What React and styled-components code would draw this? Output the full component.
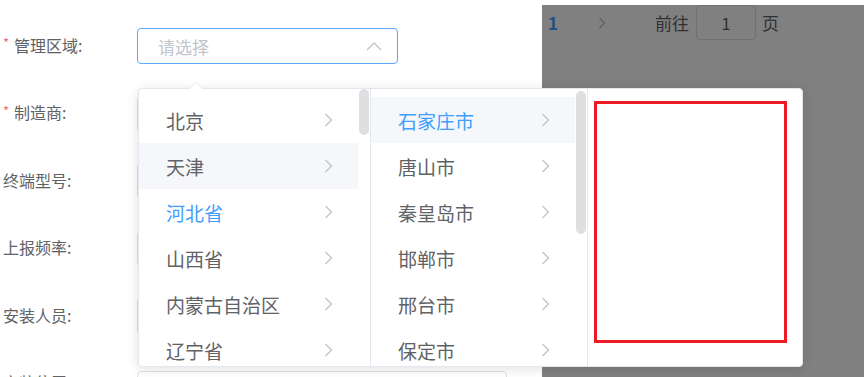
import React from 'react'
import styled, { createGlobalStyle } from 'styled-components'

const GlobalStyle = createGlobalStyle`
  html, body {
    margin: 0;
    padding: 0;
    background: #ffffff;
    font-family: "Noto Sans CJK SC", "Noto Sans", sans-serif;
  }
`

const Page = styled.div`
  position: relative;
  display: flex;
  width: 864px;
  height: 377px;
  overflow: hidden;
`

const DialogPane = styled.div`
  width: 539px;
  padding: 28px 0 0 3px;
  background: #ffffff;
`

const FormRow = styled.div`
  display: flex;
  align-items: center;
  height: 36px;
  margin-bottom: 31.5px;
`

const Label = styled.label`
  display: flex;
  align-items: center;
  width: 134px;
  margin-top: -3px;
  font-size: 16px;
  color: #606266;
  white-space: nowrap;
`

const Required = styled.span`
  color: #f56c6c;
  font-size: 13px;
  width: 11px;
  margin-top: -4px;
`

const SelectBox = styled.div`
  display: flex;
  align-items: center;
  justify-content: space-between;
  box-sizing: border-box;
  width: 261px;
  height: 36px;
  padding: 0 15px 0 20px;
  border: 1px solid #5aa9f8;
  border-radius: 4px;
  font-size: 17px;
  color: #c0c4cc;
`

const TextInput = styled.div`
  box-sizing: border-box;
  width: 370px;
  height: 36px;
  margin-top: ${p => (p.drop ? 10 : 0)}px;
  padding-left: 18px;
  border: 1px solid #dcdfe6;
  border-radius: 4px;
  font-size: 16px;
  line-height: 34px;
  color: #c0c4cc;
`

const MaskPane = styled.div`
  flex: 1;
  margin-top: 5px;
  background: #808080;
`

const Pager = styled.div`
  display: flex;
  align-items: center;
  height: 35px;
  padding-left: 6px;
  font-size: 17px;
  color: #303133;
`

const PagerNum = styled.span`
  font-weight: 700;
  color: #204f80;
  width: 50px;
`

const PagerNext = styled.span`
  display: flex;
  width: 57px;
`

const JumpInput = styled.span`
  box-sizing: border-box;
  width: 60px;
  height: 35px;
  margin: 0 6px 0 7px;
  border: 1px solid #6e7073;
  border-radius: 4px;
  text-align: center;
  line-height: 33px;
`

const Panel = styled.div`
  position: absolute;
  left: 138px;
  top: 88px;
  box-sizing: border-box;
  width: 665px;
  height: 279px;
  display: flex;
  background: #ffffff;
  border: 1px solid #e4e7ed;
  border-radius: 4px;
  box-shadow: 0 2px 12px rgba(0, 0, 0, 0.12);
`

const PopArrow = styled.span`
  position: absolute;
  left: 51px;
  top: -7px;
  width: 0;
  height: 0;
  border: 6px solid transparent;
  border-top-width: 0;
  border-bottom: 6px solid #e4e7ed;

  &::after {
    content: '';
    position: absolute;
    left: -6px;
    top: 1px;
    border: 6px solid transparent;
    border-top-width: 0;
    border-bottom: 6px solid #ffffff;
  }
`

const Menu = styled.div`
  position: relative;
  box-sizing: border-box;
  width: ${p => p.width}px;
  height: 100%;
  overflow: hidden;
  border-right: 1px solid #e4e7ed;
`

const MenuList = styled.ul`
  list-style: none;
  margin: 0 12px 0 0;
  padding: 8px 0 0;
`

const MenuItem = styled.li`
  display: flex;
  align-items: center;
  justify-content: space-between;
  height: 46px;
  padding: 0 25px 0 27px;
  font-size: 19px;
  color: ${p => (p.active ? '#409eff' : '#606266')};
  background: ${p => (p.highlight ? '#f5f7fa' : 'transparent')};
`

const Thumb = styled.span`
  position: absolute;
  right: 1px;
  top: ${p => p.top}px;
  width: 10px;
  height: ${p => p.size}px;
  border-radius: 5px;
  background: #dedfe1;
`

const EmptyMenu = styled.div`
  flex: 1;
  padding: 12px 14px 0 6px;
`

const Marker = styled.div`
  box-sizing: border-box;
  width: 193px;
  height: 242px;
  border: 3px solid #ed1c24;
`

const ChevronRight = () => (
  <svg width="9" height="14" viewBox="0 0 9 14" fill="none">
    <path d="M1.5 1 L7.5 7 L1.5 13" stroke="#c0c4cc" strokeWidth="1.3" />
  </svg>
)

const ChevronUp = () => (
  <svg width="16" height="9" viewBox="0 0 16 9" fill="none">
    <path d="M1 8 L8 1 L15 8" stroke="#c0c4cc" strokeWidth="1.4" />
  </svg>
)

const provinces = ['北京', '天津', '河北省', '山西省', '内蒙古自治区', '辽宁省']
const cities = ['石家庄市', '唐山市', '秦皇岛市', '邯郸市', '邢台市', '保定市']

const fields = [
  { label: '制造商', required: true },
  { label: '终端型号' },
  { label: '上报频率' },
  { label: '安装人员' },
  { label: '安装位置', placeholder: '请输入安装位置', drop: true },
]

export default function App() {
  return (
    <Page>
      <GlobalStyle />
      <DialogPane>
        <FormRow>
          <Label>
            <Required>*</Required>管理区域:
          </Label>
          <SelectBox>
            请选择
            <ChevronUp />
          </SelectBox>
        </FormRow>
        {fields.map(f => (
          <FormRow key={f.label}>
            <Label>
              {f.required && <Required>*</Required>}
              {f.label}:
            </Label>
            <TextInput drop={f.drop}>{f.placeholder}</TextInput>
          </FormRow>
        ))}
      </DialogPane>
      <MaskPane>
        <Pager>
          <PagerNum>1</PagerNum>
          <PagerNext>
            <svg width="9" height="12" viewBox="0 0 9 12" fill="none">
              <path d="M1.5 1 L6.5 6 L1.5 11" stroke="#5f6266" strokeWidth="1.5" />
            </svg>
          </PagerNext>
          前往
          <JumpInput>1</JumpInput>页
        </Pager>
      </MaskPane>
      <Panel>
        <PopArrow />
        <Menu width={232}>
          <MenuList>
            {provinces.map((p, i) => (
              <MenuItem key={p} active={i === 2} highlight={i === 1}>
                {p}
                <ChevronRight />
              </MenuItem>
            ))}
          </MenuList>
          <Thumb top={0} size={46} />
        </Menu>
        <Menu width={217}>
          <MenuList>
            {cities.map((c, i) => (
              <MenuItem key={c} active={i === 0} highlight={i === 0}>
                {c}
                <ChevronRight />
              </MenuItem>
            ))}
          </MenuList>
          <Thumb top={2} size={143} />
        </Menu>
        <EmptyMenu>
          <Marker />
        </EmptyMenu>
      </Panel>
    </Page>
  )
}
